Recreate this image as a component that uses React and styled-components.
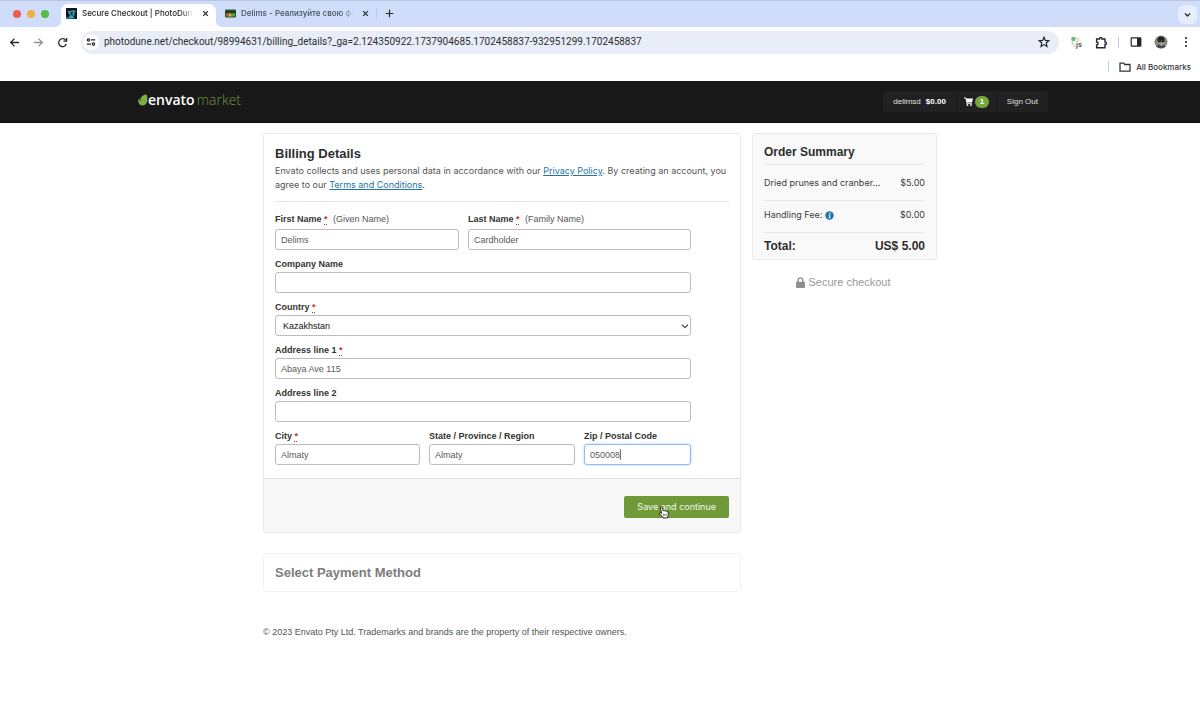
import React from "react";
import styled, { createGlobalStyle } from "styled-components";

const GlobalStyle = createGlobalStyle`
  *, *::before, *::after { box-sizing: border-box; }
  body {
    margin: 0;
    background: #fff;
    color: #545454;
    font-family: "Liberation Sans", Arial, sans-serif;
    font-size: 9px;
    line-height: 14px;
  }
  h1, h2, p, dl, dd, dt { margin: 0; }
  button, input, select { font: inherit; color: inherit; }
  button { cursor: pointer; }
`;

const ui = `font-family: Inter, "Noto Sans", sans-serif;`;

/* ---------- browser window ---------- */

const TabStrip = styled.div`
  ${ui}
  display: flex;
  align-items: stretch;
  height: 27px;
  padding: 0 3px 0 13px;
  border-top: 1px solid #b9c3dc;
  background: #cfddfb;
`;

const Lights = styled.div`
  display: flex;
  align-items: center;
  gap: 6px;
  margin-right: 12px;
`;

const Light = styled.span`
  width: 8px;
  height: 8px;
  border-radius: 50%;
  background: ${(p) => p.$color};
`;

const Tab = styled.div`
  position: relative;
  display: flex;
  align-items: center;
  width: ${(p) => (p.$active ? 155 : 160)}px;
  margin-top: 3px;
  padding: 0 4px 5px ${(p) => (p.$active ? 5 : 9)}px;
  border-radius: 7px 7px 0 0;
  background: ${(p) => (p.$active ? "#fff" : "transparent")};
  color: ${(p) => (p.$active ? "#202226" : "#474f60")};
  &::before, &::after {
    content: "";
    position: absolute;
    bottom: 0;
    width: 6px;
    height: 6px;
    display: ${(p) => (p.$active ? "block" : "none")};
  }
  &::before { left: -6px; background: radial-gradient(circle at 0 0, #cfddfb 6px, #fff 6px); }
  &::after { right: -6px; background: radial-gradient(circle at 100% 0, #cfddfb 6px, #fff 6px); }
`;

const TabTitle = styled.span`
  flex: 1;
  min-width: 0;
  margin: 0 4px 0 5px;
  overflow: hidden;
  white-space: nowrap;
  font-size: 8px;
  font-weight: 500;
  mask-image: linear-gradient(to right, #000 88%, transparent 100%);
`;

const IconButton = styled.button`
  display: inline-flex;
  align-items: center;
  justify-content: center;
  flex: none;
  width: ${(p) => p.$size || 16}px;
  height: ${(p) => p.$size || 16}px;
  padding: 0;
  border: 0;
  border-radius: 50%;
  background: ${(p) => p.$fill || "transparent"};
  color: ${(p) => p.$tone || "#24262a"};
`;

const NewTab = styled.div`
  display: flex;
  align-items: center;
  flex: 1;
  gap: 4px;
  padding-bottom: 2px;
`;

const TabSearch = styled(IconButton)`
  align-self: center;
  width: 19px;
  height: 19px;
  border-radius: 6px;
`;

const Rule = styled.span`
  flex: none;
  width: 1px;
  height: 11px;
  background: #b5cdf8;
`;

const Toolbar = styled.div`
  ${ui}
  display: flex;
  align-items: center;
  height: 30px;
  padding: 0 6px;
  background: #fff;
`;

const NavButtons = styled.div`
  display: flex;
  gap: 8px;
  margin-right: 11px;
`;

const AddressBar = styled.div`
  display: flex;
  align-items: center;
  flex: 1;
  height: 23px;
  padding: 0 7px 0 2px;
  border-radius: 12px;
  background: #e9edf7;
`;

const AddressInput = styled.input`
  flex: 1;
  min-width: 0;
  margin-left: 5px;
  padding: 0;
  border: 0;
  outline: 0;
  background: transparent;
  color: #2b2d31;
  font-family: Roboto, sans-serif;
  font-size: 10px;
`;

const Extensions = styled.div`
  display: flex;
  align-items: center;
  gap: 9px;
  margin-left: 9px;
`;

const Bookmarks = styled.div`
  ${ui}
  display: flex;
  align-items: center;
  justify-content: flex-end;
  height: 24px;
  padding: 0 9px 5px 0;
  gap: 10px;
  background: #fff;
`;

const BookmarkButton = styled.button`
  display: flex;
  align-items: center;
  gap: 5px;
  padding: 0;
  border: 0;
  background: none;
  color: #33353a;
  font-size: 8px;
  font-weight: 500;
`;

/* ---------- site header ---------- */

const SiteHeader = styled.header`
  height: 42px;
  background: #181818;
  border-bottom: 1px solid #0c0c0c;
`;

const HeaderInner = styled.div`
  display: flex;
  align-items: center;
  justify-content: space-between;
  max-width: 924px;
  height: 41px;
  margin: 0 auto;
  padding-right: 14px;
`;

const Logo = styled.a`
  display: flex;
  align-items: center;
  padding-bottom: 4px;
  color: #fff;
  font-family: "Open Sans", sans-serif;
  font-size: 14px;
  font-weight: 600;
  line-height: 18px;
  text-decoration: none;
`;

const LogoLight = styled.span`
  margin-left: 2px;
  color: #6f9a3c;
  font-weight: 300;
`;

const Account = styled.nav`
  display: flex;
  height: 21px;
  border-radius: 2px;
  background: #212121;
  font-size: 8px;
`;

const AccountLink = styled.a`
  display: flex;
  align-items: center;
  gap: ${(p) => p.$gap || 0}px;
  padding: 0 ${(p) => p.$pad || 10}px;
  color: #e0e0e0;
  text-decoration: none;
  & + & { border-left: 1px solid #1a1a1a; }
  strong { color: #fff; }
`;

const Badge = styled.span`
  width: 14px;
  height: 12px;
  border-radius: 6px;
  background: #79a63c;
  color: #fff;
  font-weight: 700;
  line-height: 12px;
  text-align: center;
`;

/* ---------- checkout ---------- */

const Page = styled.main`
  display: grid;
  grid-template-columns: minmax(0, 1fr) 185px;
  align-items: start;
  gap: 11px;
  max-width: 674px;
  margin: 10px auto 0;
`;

const Column = styled.div`
  display: flex;
  flex-direction: column;
`;

const Card = styled.section`
  border: 1px solid ${(p) => (p.$muted ? "#f1f2f4" : "#e6e9ef")};
  border-radius: 3px;
  background: #fff;
  overflow: hidden;
`;

const CardBody = styled.div`
  padding: 9px 11px 14px;
`;

const Title = styled.h1`
  color: #2e2e2e;
  font-size: 13px;
  line-height: 21px;
`;

const Intro = styled.p`
  ${ui}
  padding-bottom: 9px;
  border-bottom: 1px solid #e1e6ee;
  a { color: #1f74a8; }
`;

const Fields = styled.div`
  display: flex;
  flex-direction: column;
  gap: 9px;
  max-width: 416px;
  padding-top: 11px;
`;

const FieldRow = styled.div`
  display: grid;
  grid-template-columns: ${(p) => p.$columns};
  gap: 9px;
`;

const FieldBox = styled.div`
  display: flex;
  flex-direction: column;
  gap: ${(p) => (p.$roomy ? 3 : 1)}px;
  min-width: 0;
`;

const Label = styled.label`
  display: block;
  height: 13px;
  line-height: 13px;
  color: #333;
  font-weight: 700;
  white-space: nowrap;
`;

const Required = styled.abbr`
  color: #c9302c;
  text-decoration: underline dotted;
  text-underline-offset: 2px;
`;

const Hint = styled.span`
  margin-left: 3px;
  color: #545454;
  font-weight: 400;
`;

const ControlBox = styled.div`
  position: relative;
  height: 20px;
  svg { position: absolute; right: 2px; top: 7px; pointer-events: none; }
`;

const Input = styled.input`
  width: 100%;
  height: 21px;
  padding: 0 5px;
  border: 1px solid ${(p) => (p.$focused ? "#8fbdf0" : "#bdbdbd")};
  border-radius: 3px;
  outline: 0;
  background: #fff;
  color: #5a5a5a;
  box-shadow: ${(p) => (p.$focused ? "0 0 3px #b5d4f7" : "none")};
`;

const Select = styled.select`
  appearance: none;
  width: 100%;
  height: 21px;
  padding: 0 20px 0 7px;
  border: 1px solid #bdbdbd;
  border-radius: 3px;
  background: transparent;
  color: #111;
`;

const Caret = styled.span`
  position: absolute;
  top: 5px;
  left: 36px;
  width: 1px;
  height: 11px;
  background: #777;
`;

const CardFooter = styled.div`
  display: flex;
  justify-content: flex-end;
  padding: 17px 11px 14px;
  border-top: 1px solid #e1e3e6;
  background: #f8f8f8;
`;

const ButtonBox = styled.div`
  position: relative;
  svg { position: absolute; left: 34px; top: 10px; pointer-events: none; }
`;

const SaveButton = styled.button`
  ${ui}
  height: 22px;
  padding: 0 13px;
  border: 0;
  border-radius: 2px;
  background: #6f9a37;
  color: #f4f8ee;
`;

const PaymentCard = styled(Card)`
  margin-top: 20px;
  padding: 8px 11px;
  h2 {
    color: #7d7d7d;
    font-size: 13px;
    line-height: 21px;
  }
`;

const Copyright = styled.footer`
  max-width: 674px;
  margin: 33px auto 0;
`;

const Summary = styled(Card)`
  padding: 8px 11px 0;
  background: #f9f9f9;
  color: #3c3c3c;
  h2 {
    padding-bottom: 1px;
    color: #2e2e2e;
    font-size: 12px;
    line-height: 21px;
  }
`;

const SummaryRow = styled.div`
  ${ui}
  display: flex;
  justify-content: space-between;
  align-items: center;
  height: ${(p) => p.$height}px;
  padding-bottom: ${(p) => p.$lift || 0}px;
  border-top: 1px solid #e3e7ef;
  white-space: nowrap;
  dt { display: flex; align-items: center; gap: 3px; }
`;

const TotalRow = styled(SummaryRow)`
  color: #2e2e2e;
  font-family: "Liberation Sans", Arial, sans-serif;
  font-size: 12px;
  font-weight: 700;
`;

const Secure = styled.p`
  display: flex;
  align-items: center;
  justify-content: center;
  gap: 4px;
  margin-top: 15px;
  padding-right: 3px;
  color: #999;
  font-size: 11px;
`;

/* ---------- drawings ---------- */

const Line = ({ size = 12, d, width = 1.3, children }) => (
  <svg width={size} height={size} viewBox="0 0 12 12" fill="none" stroke="currentColor" strokeWidth={width} aria-hidden="true">
    {d && <path d={d} />}
    {children}
  </svg>
);

const Cross = () => <Line size={7} width={2} d="M2 2l8 8M10 2l-8 8" />;

const DuneIcon = () => (
  <svg width="11" height="11" viewBox="0 0 11 11" aria-hidden="true">
    <path fill="#10171d" d="M0 0h11v11H0z" />
    <path fill="#39a3bd" d="M1.500 2.500l2.500.8L6 2.200l3 .3.800 1.200-1.600.8.600 2.500-1.800 1.500L9 10.500H5.500L2 9.500 4 7.500 2.500 5z" />
    <path fill="#17394c" d="M4.500 4l2-.8.800 1.200-1.300.8 1.500 1.800L6 8 4.500 6.500z" />
    <path fill="#257086" d="M0 8.500l3 1.200 3 1.300H0z" />
  </svg>
);

const CardIcon = () => (
  <svg width="11" height="9" viewBox="0 0 11 9" aria-hidden="true">
    <rect width="11" height="8" y=".5" rx="1" fill="#29572c" />
    <path fill="#173b1c" d="M0 2h11v1.500H0z" />
    <path fill="#d1532c" d="M1 4.500h3v3H1z" />
    <path fill="#e0b53b" d="M4 4.500h2v3H4z" />
    <path fill="#5da142" d="M6 4.500h4v3H6z" />
  </svg>
);

const TuneIcon = () => (
  <Line size={10} width={1.5}>
    <circle cx="3" cy="3.5" r="1.4" />
    <path d="M6 3.5h5M1 8.5h5" />
    <circle cx="9" cy="8.5" r="1.4" />
  </Line>
);

const ScriptIcon = () => (
  <svg width="13" height="13" viewBox="0 0 13 13" aria-hidden="true">
    <path d="M2.500 5l-.5 2 3 3.200 1.500.5M5 1.800l3 1 1 2.200" fill="none" stroke="#c9cdc9" strokeWidth="1.200" />
    <circle cx="3.400" cy="3" r="2.200" fill="#77b86b" />
    <text x="6" y="10.500" fontSize="7" fontWeight="700" fill="#555">js</text>
  </svg>
);

const PuzzleIcon = () => (
  <Line size={13} width={1.3} d="M1.500 2.800h2.700c-.2-1.900 2.400-1.900 2.200 0h2.800v2.800c1.900-.1 1.900 2.400 0 2.300v2.900H1.500V8.200c1.800 0 1.800-2.700 0-2.700z" />
);

const PanelIcon = () => (
  <Line size={12} width={1.2}>
    <rect x="1.200" y="1.800" width="9.600" height="8.400" rx=".6" />
    <path d="M7 2h4v8H7z" fill="currentColor" stroke="none" />
  </Line>
);

const Avatar = () => (
  <svg width="14" height="14" viewBox="0 0 14 14" aria-hidden="true">
    <circle cx="7" cy="7" r="6.500" fill="#7f8f7c" />
    <path d="M3.400 5.500C3.200 2.500 5 1.300 7.400 1.500 10 1.600 11 3.500 10.400 5.500z" fill="#24211f" />
    <path d="M4 5.200h6.200L9.900 9 7.700 11 5 9.500z" fill="#b0958b" />
    <path d="M3.700 5.300h6.800v1.700L8.200 7.300l-1-1-1 1.100-2.200-.3z" fill="#1c1c1c" />
    <path d="M2 11.200l3-1.700 2.500 1.700 2.200-1.400 2 1.600C9 14 5 14 2 11.200z" fill="#454857" />
  </svg>
);

const Leaf = () => (
  <svg width="10" height="12" viewBox="0 0 10 12" aria-hidden="true">
    <path fill="#7fae42" d="M7.700.6c-2.400.2-5 2.300-5.300 4.900-.1.700-.1 1.400.1 2C1.500 6.800 1.200 5.500 1.500 4 .200 5.200-.100 7.200.4 8.600 1 10.600 2.800 11.700 4.800 11.500c2.600-.2 4.200-2.100 4.500-4.700C9.600 4.500 9.500 2 8.700.9 8.500.6 8.200.5 7.700.6z" />
  </svg>
);

const CartIcon = () => (
  <svg width="9" height="9" viewBox="0 0 18 18" fill="#fff" aria-hidden="true">
    <path d="M0 1h4l.8 2H18l-2 8H6.500l.4 1.500H16V14H5.500L3 3H0z" />
    <circle cx="7" cy="16" r="1.800" />
    <circle cx="14" cy="16" r="1.800" />
  </svg>
);

const InfoIcon = () => (
  <svg width="9" height="9" viewBox="0 0 9 9" aria-hidden="true">
    <circle cx="4.500" cy="4.500" r="4.200" fill="#1f74a8" />
    <path d="M4.300 1.600h1.200v1.100H4.300zM3.600 3.500h1.800L5 6.400h.6v.8H3.500v-.8H4l.3-2.100h-.7z" fill="#fff" />
  </svg>
);

const LockIcon = () => (
  <svg width="9" height="11" viewBox="0 0 9 11" aria-hidden="true">
    <path d="M2.200 5V3.200a2.300 2.300 0 0 1 4.600 0V5" fill="none" stroke="#8f8f8f" strokeWidth="1.400" />
    <rect y="4.700" width="9" height="6.300" rx=".8" fill="#8f8f8f" />
  </svg>
);

const HandPointer = () => (
  <svg width="11" height="13" viewBox="0 0 20 24" aria-hidden="true">
    <path
      d="M4 3c0-2 3-2.500 3.600-.5L9.500 9c.7-1 2.500-.8 3 .4.800-.8 2.500-.6 3 .6.900-.7 2.700-.3 2.900 1.500l.4 4.500c.1 2-1.200 3-1.200 6H9c0-2-3-3.500-6-7.500-1.200-2 .6-3.200 2.500-1.500l1 .8z"
      fill="#fff"
      stroke="#222"
      strokeWidth="1.800"
    />
    <path d="M10 14.500v4M12.500 14.500v4M15 14.500v4" stroke="#222" strokeWidth="1" />
  </svg>
);

/* ---------- form parts ---------- */

function Field({ id, label, required, hint, value, roomy, focused, children }) {
  return (
    <FieldBox $roomy={roomy}>
      <Label htmlFor={id}>
        {label} {required && <Required title="required">*</Required>}
        {hint && <Hint> {hint}</Hint>}
      </Label>
      <ControlBox>
        {children || <Input id={id} type="text" defaultValue={value} $focused={focused} />}
        {focused && <Caret />}
      </ControlBox>
    </FieldBox>
  );
}

const url =
  "photodune.net/checkout/98994631/billing_details?_ga=2.124350922.1737904685.1702458837-932951299.1702458837";

export default function App() {
  return (
    <>
      <GlobalStyle />
      <TabStrip>
        <Lights>
          <Light $color="#ee5b51" />
          <Light $color="#f0b03e" />
          <Light $color="#55bc45" />
        </Lights>
        <Tab $active>
          <DuneIcon />
          <TabTitle>Secure Checkout | PhotoDune</TabTitle>
          <IconButton $size={14} aria-label="Close tab"><Cross /></IconButton>
        </Tab>
        <Tab>
          <CardIcon />
          <TabTitle>Delims - Реализуйте свою фантазию</TabTitle>
          <IconButton $size={14} aria-label="Close tab"><Cross /></IconButton>
        </Tab>
        <NewTab>
          <Rule />
          <IconButton aria-label="New tab"><Line size={9} width={1.6} d="M6 1v10M1 6h10" /></IconButton>
        </NewTab>
        <TabSearch $fill="#e6eefd" aria-label="Search tabs">
          <Line size={9} width={1.8} d="M2.500 4.500L6 8l3.500-3.500" />
        </TabSearch>
      </TabStrip>

      <Toolbar>
        <NavButtons>
          <IconButton aria-label="Back"><Line size={11} width={1.4} d="M11 6H2M6 1.800L1.800 6 6 10.200" /></IconButton>
          <IconButton $tone="#8d8f93" aria-label="Forward"><Line size={11} width={1.4} d="M1 6h9M6 1.800L10.200 6 6 10.200" /></IconButton>
          <IconButton aria-label="Reload"><Line size={11} width={1.4} d="M10.200 7.500A4.300 4.300 0 1 1 9.500 3.500M10.500 1v3.500H7" /></IconButton>
        </NavButtons>
        <AddressBar>
          <IconButton $size={16} $fill="#fff" aria-label="Site information"><TuneIcon /></IconButton>
          <AddressInput type="text" aria-label="Address" defaultValue={url} />
          <IconButton aria-label="Bookmark this page">
            <Line width={1.2} d="M6 1.200l1.400 3.200 3.400.3-2.600 2.300.8 3.400L6 8.600 3 10.400 3.800 7 1.200 4.700l3.400-.3z" />
          </IconButton>
        </AddressBar>
        <Extensions>
          <IconButton aria-label="Script toggle"><ScriptIcon /></IconButton>
          <IconButton aria-label="Extensions"><PuzzleIcon /></IconButton>
          <Rule />
          <IconButton aria-label="Side panel"><PanelIcon /></IconButton>
          <IconButton aria-label="Profile"><Avatar /></IconButton>
          <IconButton aria-label="Menu">
            <Line>
              <g fill="currentColor" stroke="none">
                <circle cx="6" cy="2" r="1.1" />
                <circle cx="6" cy="6" r="1.1" />
                <circle cx="6" cy="10" r="1.1" />
              </g>
            </Line>
          </IconButton>
        </Extensions>
      </Toolbar>

      <Bookmarks>
        <Rule />
        <BookmarkButton>
          <Line d="M1 2.200h3.500l1.300 1.300H11v6.700H1z" />
          All Bookmarks
        </BookmarkButton>
      </Bookmarks>

      <SiteHeader>
        <HeaderInner>
          <Logo href="#home" aria-label="envato market">
            <Leaf />
            <span>envato</span>
            <LogoLight>market</LogoLight>
          </Logo>
          <Account>
            <AccountLink href="#account" $gap={5}>delimsd <strong>$0.00</strong></AccountLink>
            <AccountLink href="#cart" $gap={2} $pad={7}><CartIcon /><Badge>1</Badge></AccountLink>
            <AccountLink href="#signout">Sign Out</AccountLink>
          </Account>
        </HeaderInner>
      </SiteHeader>

      <Page>
        <Column>
          <Card>
            <CardBody>
              <Title>Billing Details</Title>
              <Intro>
                Envato collects and uses personal data in accordance with our{" "}
                <a href="#privacy">Privacy Policy</a>. By creating an account, you agree to our{" "}
                <a href="#terms">Terms and Conditions</a>.
              </Intro>
              <Fields>
                <FieldRow $columns="184fr 223fr">
                  <Field id="first" label="First Name" required hint="(Given Name)" value="Delims" roomy />
                  <Field id="last" label="Last Name" required hint="(Family Name)" value="Cardholder" roomy />
                </FieldRow>
                <Field id="company" label="Company Name" value="" />
                <Field id="country" label="Country" required>
                  <Select id="country" defaultValue="Kazakhstan">
                    <option>Kazakhstan</option>
                  </Select>
                  <Line size={8} width={2} d="M1.500 4L6 8.500 10.500 4" />
                </Field>
                <Field id="address1" label="Address line 1" required value="Abaya Ave 115" />
                <Field id="address2" label="Address line 2" value="" />
                <FieldRow $columns="145fr 146fr 107fr">
                  <Field id="city" label="City" required value="Almaty" />
                  <Field id="state" label="State / Province / Region" value="Almaty" />
                  <Field id="zip" label="Zip / Postal Code" value="050008" focused />
                </FieldRow>
              </Fields>
            </CardBody>
            <CardFooter>
              <ButtonBox>
                <SaveButton>Save and continue</SaveButton>
                <HandPointer />
              </ButtonBox>
            </CardFooter>
          </Card>
          <PaymentCard $muted>
            <h2>Select Payment Method</h2>
          </PaymentCard>
        </Column>

        <aside>
          <Summary>
            <h2>Order Summary</h2>
            <dl>
              <SummaryRow $height={36}><dt>Dried prunes and cranber…</dt><dd>$5.00</dd></SummaryRow>
              <SummaryRow $height={32} $lift={3}><dt>Handling Fee: <InfoIcon /></dt><dd>$0.00</dd></SummaryRow>
              <TotalRow $height={27}><dt>Total:</dt><dd>US$ 5.00</dd></TotalRow>
            </dl>
          </Summary>
          <Secure><LockIcon />Secure checkout</Secure>
        </aside>
      </Page>
      <Copyright>
        © 2023 Envato Pty Ltd. Trademarks and brands are the property of their respective owners.
      </Copyright>
    </>
  );
}
